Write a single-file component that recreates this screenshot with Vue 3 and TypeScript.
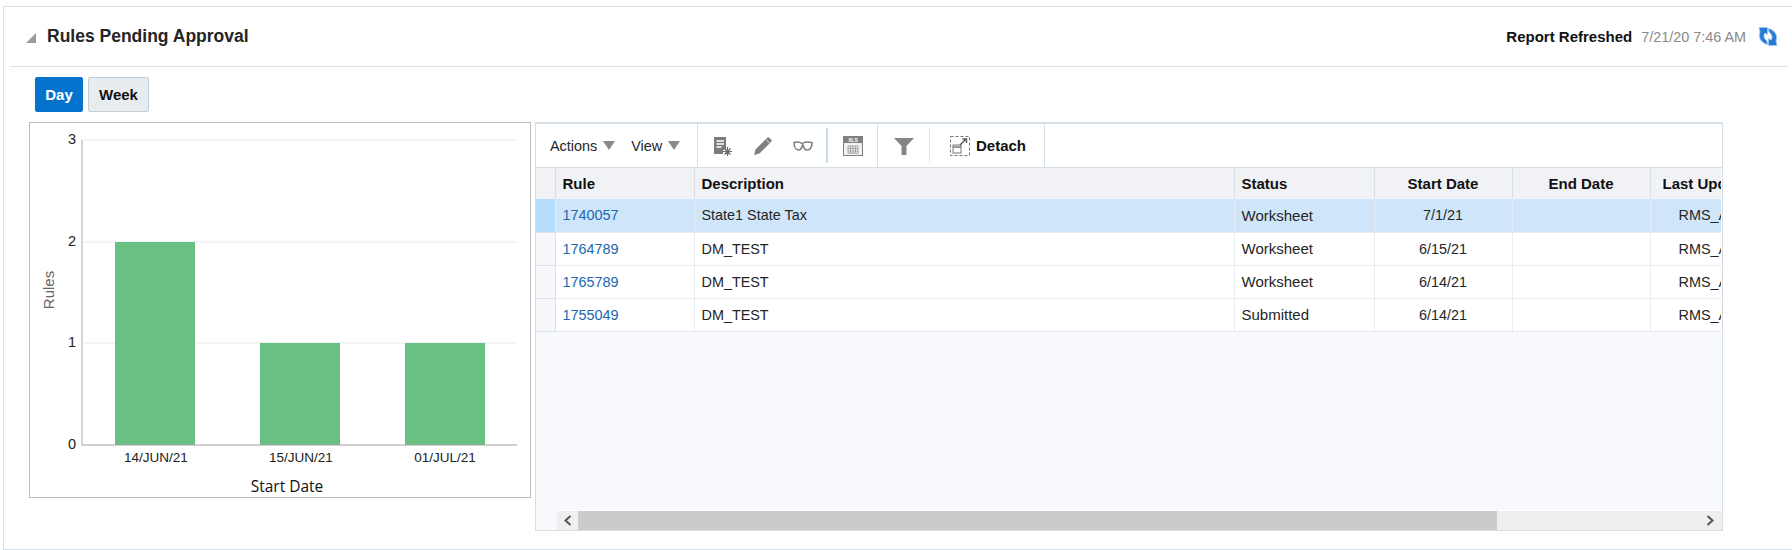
<script setup lang="ts">
interface RuleRow {
    rule: string;
    description: string;
    status: string;
    startDate: string;
}

const rows: RuleRow[] = [
    { rule: "1740057", description: "State1 State Tax", status: "Worksheet", startDate: "7/1/21" },
    { rule: "1764789", description: "DM_TEST", status: "Worksheet", startDate: "6/15/21" },
    { rule: "1765789", description: "DM_TEST", status: "Worksheet", startDate: "6/14/21" },
    { rule: "1755049", description: "DM_TEST", status: "Submitted", startDate: "6/14/21" },
];

const ticks = [
    { label: "3", y: 17 },
    { label: "2", y: 119 },
    { label: "1", y: 220 },
    { label: "0", y: 322 },
];

const bars = [
    { label: "14/JUN/21", x: 85, labelX: 126, height: 203 },
    { label: "15/JUN/21", x: 230, labelX: 271, height: 102 },
    { label: "01/JUL/21", x: 375, labelX: 415, height: 102 },
];
</script>

<template>
    <div class="panel">
        <header class="panel-header">
            <span class="collapse-icon"></span>
            <h1 class="title">Rules Pending Approval</h1>
            <div class="refreshed">
                <strong>Report Refreshed</strong>
                <span class="refreshed-date">7/21/20 7:46 AM</span>
                <svg class="refresh-icon" width="20" height="21" viewBox="0 0 20 21">
                    <g fill="#2878d8" stroke="#9ccbf5" stroke-width=".9">
                        <path d="M1 1.5 H9.5 V8.5 L7 7 C5.2 9 5.6 12.5 9 15 L9.6 18.5 C3.6 17 -.2 12 2 6 Z" />
                        <path d="M1 1.5 H9.5 V8.5 L7 7 C5.2 9 5.6 12.5 9 15 L9.6 18.5 C3.6 17 -.2 12 2 6 Z" transform="rotate(180 10 10.5)" />
                    </g>
                </svg>
            </div>
        </header>

        <div class="range-buttons">
            <button class="range-btn active">Day</button>
            <button class="range-btn">Week</button>
        </div>

        <div class="content">
            <div class="chart-box">
                <svg width="500" height="374" viewBox="0 0 500 374">
                    <g v-for="t in ticks" :key="t.label">
                        <line v-if="t.label !== '0'" x1="52" x2="487" :y1="t.y" :y2="t.y" stroke="#e6e9ed" />
                        <text x="46" :y="t.y + 4" text-anchor="end" class="tick">{{ t.label }}</text>
                    </g>
                    <rect v-for="b in bars" :key="b.x" :x="b.x" :y="322 - b.height" width="80" :height="b.height" fill="#68c182" />
                    <line x1="52" x2="52" y1="17" y2="322" stroke="#a8a8a8" />
                    <line x1="52" x2="487" y1="322" y2="322" stroke="#a0a0a0" />
                    <text v-for="b in bars" :key="b.label" :x="b.labelX" y="339" text-anchor="middle" class="cat">{{ b.label }}</text>
                    <text x="257" y="369" text-anchor="middle" class="axis-title">Start Date</text>
                    <text transform="translate(24 167) rotate(-90)" text-anchor="middle" class="axis-y">Rules</text>
                </svg>
            </div>

            <div class="table-panel">
                <div class="toolbar">
                    <div class="tool-group menus">
                        <span class="menu">Actions <i class="caret"></i></span>
                        <span class="menu">View <i class="caret"></i></span>
                    </div>
                    <div class="tool-group icons-a">
                        <svg width="20" height="20" viewBox="0 0 20 20">
                            <path d="M1 1 H13 V13 L10 14 V18 H1 Z" fill="#7c7c7c" />
                            <path d="M3.5 5 H11 M3.5 8 H11 M3.5 11 H8.5" stroke="#fff" stroke-width="1.3" />
                            <path d="M14.5 11 V20 M10 15.5 H19 M11.5 12.5 L17.5 18.5 M17.5 12.5 L11.5 18.5" stroke="#6b6b6b" stroke-width="1.2" />
                        </svg>
                        <svg width="20" height="20" viewBox="0 0 20 20">
                            <path d="M1 19 L2.5 13.5 L14 2 L15.5 1 L19 4.5 L18 6 L6.5 17.5 Z" fill="#808080" />
                            <path d="M13 3.5 L16.5 7" stroke="#fff" stroke-width=".8" />
                        </svg>
                        <svg width="20" height="10" viewBox="0 0 20 10">
                            <path d="M1 1.5 C5 .5 7 1 9 2.5 C11 1 15 .5 19 1.5 C19 6 17 9 14 9 C11.5 9 10.5 6 10 4 H9.5 C9 6 8 9 5.5 9 C3 9 1 6 1 1.5 Z" fill="none" stroke="#7c7c7c" stroke-width="1.5" />
                        </svg>
                        <i class="short-sep thick"></i>
                        <svg class="xls" width="20" height="20" viewBox="0 0 20 20">
                            <rect x="0" y="0" width="20" height="20" fill="#808080" />
                            <rect x="1" y="7" width="18" height="12" fill="#f1f1f1" />
                            <text x="10" y="5.6" text-anchor="middle" class="xls-text">XLS</text>
                            <path d="M5 10 H15 M5 12.5 H15 M5 15 H15 M5 17.2 H15 M5 10 V17.2 M7.5 10 V17.2 M10 10 V17.2 M12.5 10 V17.2 M15 10 V17.2" stroke="#8a8a8a" stroke-width=".7" fill="none" />
                        </svg>
                    </div>
                    <div class="tool-group filter-group">
                        <svg width="20" height="20" viewBox="0 0 20 20">
                            <path d="M0 2 H20 L12.5 10 V19 H7.5 V10 Z" fill="#858585" />
                        </svg>
                        <i class="short-sep"></i>
                    </div>
                    <div class="tool-group detach-group">
                        <svg width="20" height="20" viewBox="0 0 20 20">
                            <rect x=".5" y=".5" width="19" height="19" fill="none" stroke="#777" stroke-dasharray="3 2" />
                            <rect x="3" y="9" width="8" height="8" fill="#fff" stroke="#777" />
                            <path d="M3 11 H11" stroke="#777" stroke-width="1.5" />
                            <path d="M10 9 L16 3 M12.5 3 H16.5 V7" stroke="#555" stroke-width="1.4" fill="none" />
                        </svg>
                        <strong>Detach</strong>
                    </div>
                </div>

                <div class="table-scroll">
                    <table class="rules-table">
                        <colgroup>
                            <col class="c-select" />
                            <col class="c-rule" />
                            <col class="c-desc" />
                            <col class="c-status" />
                            <col class="c-start" />
                            <col class="c-end" />
                            <col class="c-last" />
                        </colgroup>
                        <thead>
                            <tr>
                                <th></th>
                                <th>Rule</th>
                                <th>Description</th>
                                <th>Status</th>
                                <th class="center">Start Date</th>
                                <th class="center">End Date</th>
                                <th class="last-head">Last Updated By</th>
                            </tr>
                        </thead>
                        <tbody>
                            <tr v-for="(r, i) in rows" :key="r.rule" :class="{ selected: i === 0 }">
                                <td class="selector"></td>
                                <td><a class="rule-link">{{ r.rule }}</a></td>
                                <td>{{ r.description }}</td>
                                <td class="status-cell">{{ r.status }}</td>
                                <td class="center">{{ r.startDate }}</td>
                                <td></td>
                                <td class="last-cell">RMS_ADMIN</td>
                            </tr>
                        </tbody>
                    </table>
                </div>

                <div class="scrollbar">
                    <span class="scroll-btn">
                        <svg width="9" height="11" viewBox="0 0 9 11"><path d="M7.5 1 L2.5 5.5 L7.5 10" fill="none" stroke="#555" stroke-width="2" /></svg>
                    </span>
                    <span class="scroll-thumb"></span>
                    <span class="scroll-track">
                        <svg width="9" height="11" viewBox="0 0 9 11"><path d="M1.5 1 L6.5 5.5 L1.5 10" fill="none" stroke="#555" stroke-width="2" /></svg>
                    </span>
                </div>
            </div>
        </div>
    </div>
</template>

<style>
body {
    background: #fff;
    overflow: hidden;
}
</style>

<style scoped>
.panel {
    box-sizing: border-box;
    height: 544px;
    margin: 6px 0 0 3px;
    border: 1px solid #d9e1e8;
    border-right: none;
    font-family: "Liberation Sans", Arial, sans-serif;
    font-size: 14.4px;
    color: #252525;
}

.panel-header {
    display: flex;
    align-items: center;
    height: 59px;
    margin: 0 4px 0 6px;
    border-bottom: 1px solid #d9e1e8;
}

.collapse-icon {
    width: 0;
    height: 0;
    margin: 2px 11px 0 16px;
    border-left: 10px solid transparent;
    border-bottom: 10px solid #9a9a9a;
}

.title {
    margin: 0;
    font-size: 17.5px;
    font-weight: bold;
}

.refreshed {
    display: flex;
    align-items: center;
    margin-left: auto;
    margin-right: 10px;
    color: #111;
}

.refreshed strong {
    font-size: 15px;
}

.refreshed-date {
    margin-left: 9px;
    color: #8a8a8a;
}

.refresh-icon {
    margin-left: 12px;
}

.range-buttons {
    display: flex;
    gap: 5px;
    padding: 10px 0 10px 31px;
}

.range-btn {
    width: 61px;
    height: 35px;
    padding: 0;
    border: 1px solid #c4ced7;
    border-radius: 2px;
    background: #e9ecef;
    font: bold 15px "Liberation Sans", Arial, sans-serif;
    color: #111;
}

.range-btn.active {
    width: 48px;
    background: #0572ce;
    border-color: #0572ce;
    color: #fff;
}

.content {
    display: flex;
    align-items: flex-start;
    gap: 4px;
    padding-left: 25px;
}

.chart-box {
    box-sizing: border-box;
    width: 502px;
    height: 376px;
    border: 1px solid #bdbdbd;
}

.chart-box svg {
    display: block;
}

.tick {
    font: 14.5px "Liberation Sans", Arial, sans-serif;
    fill: #222;
}

.cat {
    font: 13.5px "Liberation Sans", Arial, sans-serif;
    fill: #222;
}

.axis-title {
    font: 15.5px "Open Sans", sans-serif;
    fill: #111;
}

.axis-y {
    font: 15px "Liberation Sans", Arial, sans-serif;
    fill: #666;
}

.xls-text {
    font: bold 5px "Liberation Sans", Arial, sans-serif;
    fill: #fff;
}

.table-panel {
    box-sizing: border-box;
    display: flex;
    flex-direction: column;
    width: 1188px;
    height: 409px;
    border: 1px solid #d6dfe6;
    border-top-width: 2px;
    background: #f7f9fd;
}

.toolbar {
    display: flex;
    flex: none;
    height: 43px;
    background: #fff;
    border-bottom: 1px solid #d6dfe6;
}

.tool-group {
    display: flex;
    align-items: center;
    border-right: 1px solid #d6dfe6;
}

.menus {
    width: 162px;
    box-sizing: border-box;
    padding-left: 14px;
    gap: 16px;
}

.menu {
    display: flex;
    align-items: center;
    gap: 6px;
}

.caret {
    width: 0;
    height: 0;
    border-left: 6px solid transparent;
    border-right: 6px solid transparent;
    border-top: 9px solid #8a8a8a;
}

.icons-a {
    box-sizing: border-box;
    width: 180px;
    padding-left: 15px;
    gap: 20px;
}

.short-sep {
    display: block;
    flex: none;
    width: 1px;
    height: 35px;
    background: #dfe5ea;
}

.short-sep.thick {
    width: 2px;
    background: #c9dcea;
    margin: 0 -5px 0 -7px;
}

.filter-group {
    box-sizing: border-box;
    width: 52px;
    padding-left: 16px;
    border-right: none;
    gap: 15px;
}

.detach-group {
    box-sizing: border-box;
    width: 115px;
    padding-left: 20px;
    gap: 6px;
}

.detach-group strong {
    font-size: 15px;
    color: #111;
}

.table-scroll {
    flex: 1;
    min-height: 0;
    overflow: hidden;
    margin-right: 1px;
}

.rules-table {
    width: 1310px;
    table-layout: fixed;
    border-collapse: collapse;
}

.c-select { width: 19px; }
.c-rule { width: 139px; }
.c-desc { width: 540px; }
.c-status { width: 140px; }
.c-start { width: 138px; }
.c-end { width: 138px; }
.c-last { width: 196px; }

th {
    height: 31px;
    padding: 0 0 0 7px;
    box-sizing: border-box;
    background: #f0f2f6;
    border-right: 1px solid #d6dfe6;
    text-align: left;
    font-size: 15px;
    font-weight: bold;
    color: #111;
}

td {
    height: 33px;
    padding: 0 0 0 7px;
    box-sizing: border-box;
    background: #fff;
    border-right: 1px solid #e8ebef;
    border-bottom: 1px solid #e8ebef;
    white-space: nowrap;
    overflow: hidden;
}

th.center,
td.center {
    text-align: center;
    padding: 0;
}

.status-cell {
    font-size: 15px;
}

.last-head {
    padding-left: 12px;
}

.last-cell {
    padding-left: 28px;
}

td.selector {
    background: #f5f7fb;
    padding: 0;
    border-right-color: #dde2e8;
    border-bottom-color: #dde2e8;
}

.selected td {
    background: #cfe6fa;
    border-right-color: #e4eff9;
}

.selected td.selector {
    background: #b5dcfb;
}

.rule-link {
    color: #2267ae;
}

.scrollbar {
    display: flex;
    flex: none;
    height: 19px;
    margin-left: 21px;
    border-top: 1px solid #fff;
}

.scroll-btn {
    display: flex;
    align-items: center;
    justify-content: center;
    width: 21px;
    background: #efefef;
}

.scroll-thumb {
    width: 919px;
    background: #cbcbcb;
}

.scroll-track {
    display: flex;
    flex: 1;
    align-items: center;
    justify-content: flex-end;
    padding-right: 7px;
    background: #efefef;
}
</style>
